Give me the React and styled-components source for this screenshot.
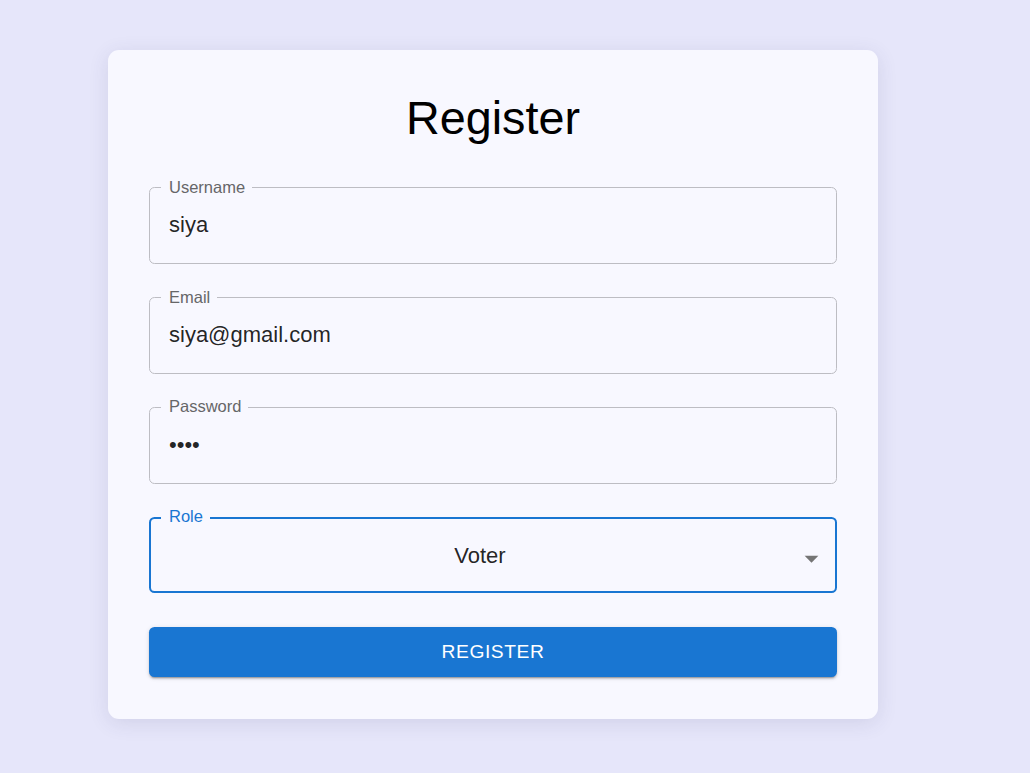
import React from 'react';
import styled, { createGlobalStyle } from 'styled-components';

const GlobalStyle = createGlobalStyle`
  html, body {
    margin: 0;
    padding: 0;
    background: #e6e6fa;
    font-family: 'Liberation Sans', Arial, Helvetica, sans-serif;
  }
`;

const Page = styled.div`
  min-height: 100vh;
  box-sizing: border-box;
  padding: 50px 0 40px 108px;
  display: flex;
  align-items: flex-start;
`;

const Card = styled.div`
  width: 770px;
  box-sizing: border-box;
  background: #f8f8ff;
  border-radius: 11px;
  box-shadow: 0 4px 20px rgba(60, 60, 110, 0.12);
  padding: 40px 41px 42px;
  display: flex;
  flex-direction: column;
`;

const Title = styled.h2`
  margin: 0 0 32px;
  font-size: 46.75px;
  font-weight: 400;
  line-height: 1.235;
  text-align: center;
  color: #000;
`;

const Form = styled.form`
  display: flex;
  flex-direction: column;
  gap: 25.75px;
`;

const Field = styled.fieldset`
  margin: 0;
  padding: 0;
  min-width: 0;
  border: ${(p) => (p.focused ? '2px solid #1976d2' : '1px solid #bdbdc3')};
  border-radius: 5.5px;
`;

const Legend = styled.legend`
  margin-left: ${(p) => (p.focused ? '10px' : '11px')};
  padding: 0 7px 2px 8px;
  font-size: 16.5px;
  line-height: 14.5px;
  color: ${(p) => (p.focused ? '#1976d2' : '#666668')};
`;

const Value = styled.div`
  height: 31.6px;
  line-height: 31.6px;
  padding: ${(p) => (p.focused ? '14px 44px 20px 18px' : '13px 19px 22px')};
  font-size: 22px;
  color: rgba(0, 0, 0, 0.87);
`;

const SelectRow = styled.div`
  display: flex;
  align-items: center;
  position: relative;
`;

const SelectValue = styled(Value)`
  flex: 1;
  text-align: center;
`;

const Arrow = styled.svg`
  position: absolute;
  right: 7.5px;
  top: 50%;
  margin-top: -16.5px;
  width: 33px;
  height: 33px;
  fill: #757575;
`;

const Button = styled.button`
  margin-top: 8px;
  height: 49.5px;
  border: none;
  border-radius: 5.5px;
  background: #1976d2;
  color: #fff;
  font-family: inherit;
  font-size: 19.25px;
  font-weight: 500;
  letter-spacing: 0.55px;
  text-transform: uppercase;
  box-shadow: 0 3px 1px -2px rgba(0, 0, 0, 0.2), 0 2px 2px 0 rgba(0, 0, 0, 0.14),
    0 1px 5px 0 rgba(0, 0, 0, 0.12);
  cursor: pointer;
`;

const TextField = ({ label, value }) => (
  <Field>
    <Legend>{label}</Legend>
    <Value>{value}</Value>
  </Field>
);

export default function App() {
  return (
    <>
      <GlobalStyle />
      <Page>
        <Card>
          <Title>Register</Title>
          <Form onSubmit={(e) => e.preventDefault()}>
            <TextField label="Username" value="siya" />
            <TextField label="Email" value="siya@gmail.com" />
            <TextField label="Password" value="••••" />
            <Field focused>
              <Legend focused>Role</Legend>
              <SelectRow>
                <SelectValue focused>Voter</SelectValue>
                <Arrow viewBox="0 0 24 24">
                  <path d="M7 10l5 5 5-5z" />
                </Arrow>
              </SelectRow>
            </Field>
            <Button type="submit">Register</Button>
          </Form>
        </Card>
      </Page>
    </>
  );
}
